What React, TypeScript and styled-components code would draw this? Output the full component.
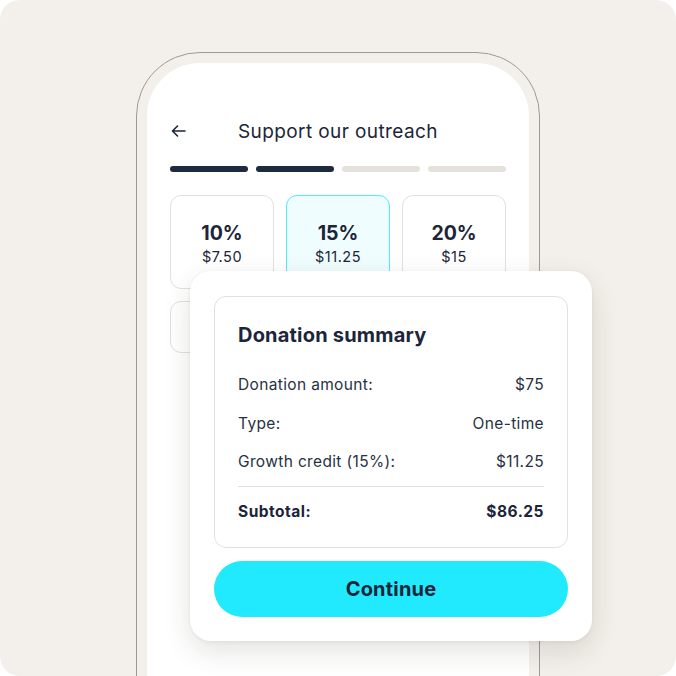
import React from "react";
import styled, { createGlobalStyle } from "styled-components";

const Global = createGlobalStyle`
  html, body { margin: 0; padding: 0; background: #ffffff; }
  body { font-family: Inter, "Noto Sans", sans-serif; color: #1c2539; -webkit-font-smoothing: antialiased; }
  * { box-sizing: border-box; }
`;

const Page = styled.div`
  position: relative;
  width: 676px;
  height: 676px;
  background: #f3f0eb;
  border-radius: 20px;
  overflow: hidden;
  padding: 52px 0 0 136px;
`;

const Phone = styled.div`
  width: 404px;
  height: 700px;
  border: 1px solid #9d9a94;
  border-radius: 64px;
  padding: 10px;
  background: #f3f0eb;
`;

const Screen = styled.div`
  height: 100%;
  background: #ffffff;
  border-radius: 53px 53px 0 0;
  padding: 48px 23px 0;
  display: flex;
  flex-direction: column;
`;

const Header = styled.div`
  height: 40px;
  display: grid;
  grid-template-columns: 1fr auto 1fr;
  align-items: center;
`;

const BackButton = styled.div`
  display: flex;
  align-items: center;
  padding-left: 1px;
  color: #1c2539;
`;

const Title = styled.div`
  font-size: 19px;
  font-weight: 400;
  letter-spacing: 0.4px;
  color: #1c2539;
`;

const Progress = styled.div`
  margin-top: 15px;
  display: grid;
  grid-template-columns: repeat(4, 1fr);
  gap: 8px;
`;

const Segment = styled.div<{ $done: boolean }>`
  height: 6px;
  border-radius: 3px;
  background: ${(p) => (p.$done ? "#1d2a40" : "#e5e1db")};
`;

const TipGrid = styled.div`
  margin-top: 23px;
  display: grid;
  grid-template-columns: repeat(3, 1fr);
  gap: 12px;
`;

const TipCard = styled.div<{ $selected?: boolean }>`
  height: 94px;
  border-radius: 11px;
  border: 1px solid ${(p) => (p.$selected ? "#4eeefb" : "#e4e1dc")};
  background: ${(p) => (p.$selected ? "#effdfe" : "#ffffff")};
  display: flex;
  flex-direction: column;
  align-items: center;
  justify-content: center;
  gap: 3px;
  padding-top: 2px;
`;

const CustomCard = styled.div`
  grid-column: 1 / -1;
  height: 52px;
  border-radius: 11px;
  border: 1px solid #e4e1dc;
  background: #ffffff;
`;

const TipPercent = styled.div`
  font-size: 19.5px;
  font-weight: 700;
  line-height: 24px;
  color: #1c2539;
`;

const TipAmount = styled.div`
  font-size: 14.5px;
  line-height: 18px;
  letter-spacing: 0.5px;
  color: #1c2539;
`;

const Sheet = styled.div`
  position: absolute;
  left: 190px;
  top: 271px;
  width: 402px;
  background: #ffffff;
  border-radius: 21px;
  padding: 25px 24px 24px;
  display: flex;
  flex-direction: column;
  gap: 13px;
  box-shadow: 0 10px 28px rgba(40, 35, 25, 0.13), 0 1px 4px rgba(40, 35, 25, 0.06);
`;

const Summary = styled.div`
  border: 1px solid #e4e1dc;
  border-radius: 12px;
  padding: 26px 23px 25px;
  display: flex;
  flex-direction: column;
`;

const SummaryTitle = styled.div`
  font-size: 20px;
  font-weight: 700;
  line-height: 24px;
  letter-spacing: 0.2px;
  color: #1c2539;
  margin-bottom: 28px;
`;

const Rows = styled.div`
  display: flex;
  flex-direction: column;
  gap: 18.5px;
`;

const Row = styled.div<{ $strong?: boolean }>`
  display: flex;
  justify-content: space-between;
  align-items: center;
  font-size: 15.5px;
  line-height: 20px;
  letter-spacing: ${(p) => (p.$strong ? "0.5px" : "0.35px")};
  font-weight: ${(p) => (p.$strong ? 700 : 400)};
  color: ${(p) => (p.$strong ? "#1c2539" : "#283143")};
`;

const Divider = styled.div`
  height: 1px;
  background: #e4e1dc;
  margin: 14px 0 15px;
`;

const ContinueButton = styled.button`
  height: 56px;
  border: none;
  border-radius: 28px;
  background: #22eafe;
  font-family: Inter, "Noto Sans", sans-serif;
  font-size: 20px;
  font-weight: 700;
  letter-spacing: 0.2px;
  color: #1c2539;
  cursor: pointer;
`;

const tips = [
  { pct: "10%", amt: "$7.50" },
  { pct: "15%", amt: "$11.25", selected: true },
  { pct: "20%", amt: "$15" },
];

const rows = [
  { label: "Donation amount:", value: "$75" },
  { label: "Type:", value: "One-time" },
  { label: "Growth credit (15%):", value: "$11.25" },
];

export default function App() {
  return (
    <>
      <Global />
      <Page>
        <Phone>
          <Screen>
            <Header>
              <BackButton>
                <svg width="15" height="12" viewBox="0 0 15 12" fill="none">
                  <path d="M14 6H1.5M6.5 1L1.5 6l5 5" stroke="#1c2539" strokeWidth="1.6" strokeLinecap="round" strokeLinejoin="round" />
                </svg>
              </BackButton>
              <Title>Support our outreach</Title>
              <span />
            </Header>
            <Progress>
              <Segment $done />
              <Segment $done />
              <Segment $done={false} />
              <Segment $done={false} />
            </Progress>
            <TipGrid>
              {tips.map((t) => (
                <TipCard key={t.pct} $selected={t.selected}>
                  <TipPercent>{t.pct}</TipPercent>
                  <TipAmount>{t.amt}</TipAmount>
                </TipCard>
              ))}
              <CustomCard />
            </TipGrid>
          </Screen>
        </Phone>
        <Sheet>
          <Summary>
            <SummaryTitle>Donation summary</SummaryTitle>
            <Rows>
              {rows.map((r) => (
                <Row key={r.label}>
                  <span>{r.label}</span>
                  <span>{r.value}</span>
                </Row>
              ))}
            </Rows>
            <Divider />
            <Row $strong>
              <span>Subtotal:</span>
              <span>$86.25</span>
            </Row>
          </Summary>
          <ContinueButton>Continue</ContinueButton>
        </Sheet>
      </Page>
    </>
  );
}
